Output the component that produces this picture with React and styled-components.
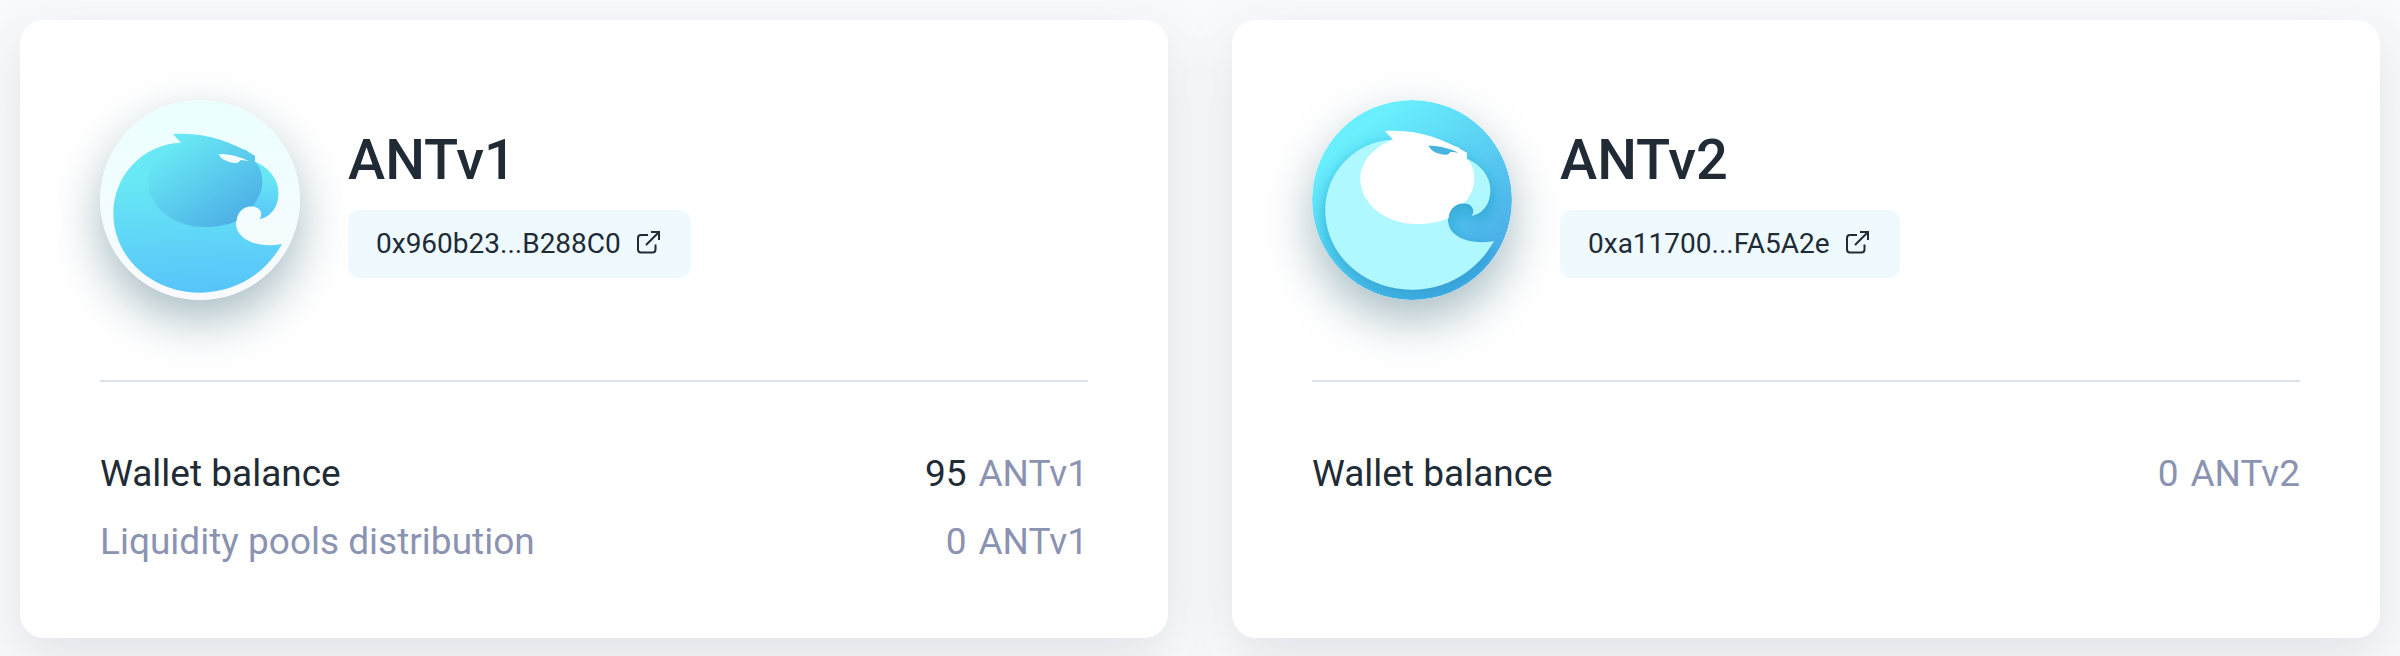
import React from "react";
import styled, { createGlobalStyle } from "styled-components";

const GlobalStyle = createGlobalStyle`
  * { box-sizing: border-box; }
  body {
    margin: 0;
    background: #f9fafc;
    color: #212b36;
    font-family: Roboto, "Liberation Sans", sans-serif;
  }
`;

const Page = styled.main`
  display: grid;
  grid-template-columns: repeat(auto-fit, minmax(640px, 1fr));
  gap: 64px;
  padding: 20px 20px 18px;
`;

const Card = styled.section`
  padding: 80px 80px 78px;
  border-radius: 24px;
  background: #fff;
  box-shadow: 0 20px 60px rgba(33, 58, 74, 0.12);
`;

const Header = styled.header`
  display: flex;
  align-items: center;
  gap: 48px;
  padding-bottom: 80px;
  border-bottom: 2px solid #dde4e9;
`;

const TokenLogo = styled.svg`
  flex: none;
  width: 200px;
  height: 200px;
  border-radius: 50%;
  box-shadow: 0 20px 48px rgba(38, 91, 108, 0.4);
`;

const Identity = styled.div`
  display: flex;
  flex-direction: column;
  align-items: flex-start;
  gap: 12px;
`;

const TokenName = styled.h2`
  margin: 0;
  font-size: 56px;
  font-weight: 500;
  line-height: 76px;
`;

const AddressLink = styled.a`
  display: flex;
  align-items: center;
  gap: 12px;
  padding: 0 28px;
  border-radius: 12px;
  background: #eefaff;
  color: inherit;
  font-size: 28px;
  line-height: 68px;
  text-decoration: none;
`;

const ExternalIcon = styled.svg`
  width: 30px;
  height: 30px;
  fill: none;
  stroke: currentColor;
  stroke-width: 2;
`;

const Balances = styled.dl`
  display: flex;
  flex-direction: column;
  gap: 32px;
  margin: 0;
  padding-top: 74px;
`;

const BalanceRow = styled.div`
  display: flex;
  justify-content: space-between;
  color: ${(p) => (p.$muted ? "#8a93b1" : "#212b36")};
  font-size: 37px;
  line-height: 36px;
`;

const Label = styled.dt``;

const Amount = styled.dd`
  display: flex;
  gap: 12px;
  margin: 0;
  color: ${(p) => (p.$empty ? "#8a93b1" : "#212b36")};
  font-variant-numeric: tabular-nums;
`;

const Unit = styled.span`
  color: #8a93b1;
`;

const BODY =
  "M303 188C190 192 100 285 100 400C100 532 215 638 360 638C465 638 556 582 606 492C535 506 468 480 468 430C468 400 488 379 514 379C538 379 552 398 539 417C570 411 595 384 595 340C595 295 565 263 525 245L500 210Z";
const HEAD =
  "M279 162C375 156 450 183 525 227L525 245C541 262 547 282 547 303C547 335 533 362 515 379C488 379 470 400 470 423C440 436 412 441 375 441C280 441 205 380 205 305C205 255 245 208 303 188Z";
const EYE =
  "M415 222C450 222 480 230 506 243L482 240C478 243 476 249 467 249C445 248 425 240 415 222Z";

function AntV1Logo() {
  return (
    <TokenLogo viewBox="60 60 600 600" role="img" aria-label="ANTv1 logo">
      <defs>
        <linearGradient id="v1-back" x1="0" y1="0" x2="0" y2="1">
          <stop offset="0" stopColor="#ebffff" />
          <stop offset="1" stopColor="#f9fafd" />
        </linearGradient>
        <linearGradient id="v1-body" gradientUnits="userSpaceOnUse" x1="340" y1="290" x2="360" y2="638">
          <stop offset="0" stopColor="#68e8f4" />
          <stop offset="1" stopColor="#57c4fa" />
        </linearGradient>
        <linearGradient id="v1-beak" gradientUnits="userSpaceOnUse" x1="560" y1="290" x2="560" y2="417">
          <stop offset="0" stopColor="#68e8f4" />
          <stop offset="1" stopColor="#57c4fa" />
        </linearGradient>
        <linearGradient id="v1-head" gradientUnits="userSpaceOnUse" x1="270" y1="200" x2="460" y2="470">
          <stop offset="0" stopColor="#68e8f4" />
          <stop offset="1" stopColor="#4aaae5" />
        </linearGradient>
      </defs>
      <circle cx="360" cy="360" r="300" fill="url(#v1-back)" />
      <path d={BODY} fill="url(#v1-body)" />
      <path
        d="M525 245C565 263 595 295 595 340C595 384 570 411 539 417C552 398 538 379 514 379Z"
        fill="url(#v1-beak)"
      />
      <path d={HEAD} fill="url(#v1-head)" />
      <path d={EYE} fill="#f2fdff" />
    </TokenLogo>
  );
}

function AntV2Logo() {
  return (
    <TokenLogo viewBox="60 60 600 600" role="img" aria-label="ANTv2 logo">
      <defs>
        <linearGradient id="v2-back" x1="0.25" y1="0.15" x2="0.8" y2="0.85">
          <stop offset="0" stopColor="#69effd" />
          <stop offset="1" stopColor="#4aaee8" />
        </linearGradient>
        <filter id="v2-shade" x="-20%" y="-20%" width="140%" height="150%">
          <feDropShadow dx="0" dy="16" stdDeviation="24" floodColor="#0c90bd" floodOpacity="0.6" />
        </filter>
      </defs>
      <circle cx="360" cy="360" r="300" fill="url(#v2-back)" />
      <g transform="translate(0 -9)">
        <path d={BODY} fill="#b0f8ff" filter="url(#v2-shade)" />
        <path d={HEAD} fill="#fff" />
        <path d={EYE} fill="#47b5dd" transform="translate(-6 -16)" />
      </g>
    </TokenLogo>
  );
}

const tokens = [
  {
    name: "ANTv1",
    address: "0x960b23...B288C0",
    Logo: AntV1Logo,
    balances: [
      { label: "Wallet balance", value: 95 },
      { label: "Liquidity pools distribution", value: 0, muted: true },
    ],
  },
  {
    name: "ANTv2",
    address: "0xa11700...FA5A2e",
    Logo: AntV2Logo,
    balances: [{ label: "Wallet balance", value: 0 }],
  },
];

function TokenCard({ name, address, Logo, balances }) {
  return (
    <Card>
      <Header>
        <Logo />
        <Identity>
          <TokenName>{name}</TokenName>
          <AddressLink href="#">
            {address}
            <ExternalIcon viewBox="0 0 30 30" aria-hidden="true">
              <path d="M15 6H8Q5 6 5 9V20.500Q5 23.500 8 23.500H19.500Q22.500 23.500 22.500 20.500V15.500" />
              <path d="M18 3H26V11M26 3L13 16" />
            </ExternalIcon>
          </AddressLink>
        </Identity>
      </Header>
      <Balances>
        {balances.map(({ label, value, muted }) => (
          <BalanceRow key={label} $muted={muted}>
            <Label>{label}</Label>
            <Amount $empty={value === 0}>
              {value}
              <Unit>{name}</Unit>
            </Amount>
          </BalanceRow>
        ))}
      </Balances>
    </Card>
  );
}

export default function App() {
  return (
    <>
      <GlobalStyle />
      <Page>
        {tokens.map((token) => (
          <TokenCard key={token.name} {...token} />
        ))}
      </Page>
    </>
  );
}
